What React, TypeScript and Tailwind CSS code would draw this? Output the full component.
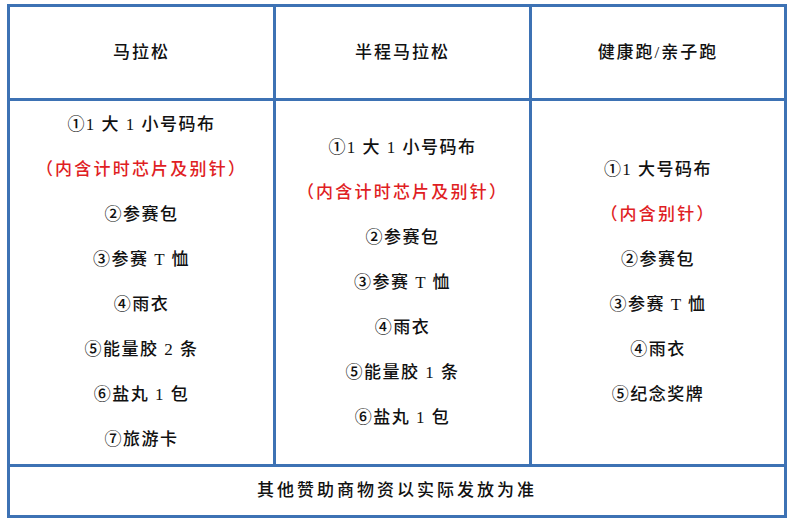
const font = { fontFamily: '"Liberation Serif", "Noto Sans CJK SC", serif' };

type Line = { text: string; red?: boolean };

const columns: { title: string; lines: Line[] }[] = [
  {
    title: "马拉松",
    lines: [
      { text: "①1 大 1 小号码布" },
      { text: "（内含计时芯片及别针）", red: true },
      { text: "②参赛包" },
      { text: "③参赛 T 恤" },
      { text: "④雨衣" },
      { text: "⑤能量胶 2 条" },
      { text: "⑥盐丸 1 包" },
      { text: "⑦旅游卡" },
    ],
  },
  {
    title: "半程马拉松",
    lines: [
      { text: "①1 大 1 小号码布" },
      { text: "（内含计时芯片及别针）", red: true },
      { text: "②参赛包" },
      { text: "③参赛 T 恤" },
      { text: "④雨衣" },
      { text: "⑤能量胶 1 条" },
      { text: "⑥盐丸 1 包" },
    ],
  },
  {
    title: "健康跑/亲子跑",
    lines: [
      { text: "①1 大号码布" },
      { text: "（内含别针）", red: true },
      { text: "②参赛包" },
      { text: "③参赛 T 恤" },
      { text: "④雨衣" },
      { text: "⑤纪念奖牌" },
    ],
  },
];

export default function App() {
  return (
    <div className="w-[800px] h-[526px] bg-white pl-[7px] pt-[4px]" style={font}>
      <div className="w-[780px] border-[3px] border-[#3d72b4] text-[17px] font-medium text-[#111]">
        <div className="grid grid-cols-[263px_256px_255px] h-[91px]">
          {columns.map((c, i) => (
            <div
              key={c.title}
              className={`flex items-center justify-center tracking-[2px] ${i > 0 ? "border-l-[3px] border-[#3d72b4]" : ""}`}
            >
              {c.title}
            </div>
          ))}
        </div>
        <div className="grid grid-cols-[263px_256px_255px] h-[366px] border-t-[3px] border-[#3d72b4]">
          {columns.map((c, i) => (
            <div
              key={c.title}
              className={`flex flex-col items-center justify-center ${i > 0 ? "border-l-[3px] border-[#3d72b4]" : ""}`}
            >
              {c.lines.map((l, j) => (
                <div
                  key={j}
                  className={`h-[45px] flex items-center whitespace-pre ${l.red ? "text-[#e01e24] tracking-[2.2px]" : "tracking-[1.5px]"}`}
                >
                  {l.text}
                </div>
              ))}
            </div>
          ))}
        </div>
        <div className="h-[51px] border-t-[3px] border-[#3d72b4] flex items-center justify-center tracking-[3px]">
          其他赞助商物资以实际发放为准
        </div>
      </div>
    </div>
  );
}
